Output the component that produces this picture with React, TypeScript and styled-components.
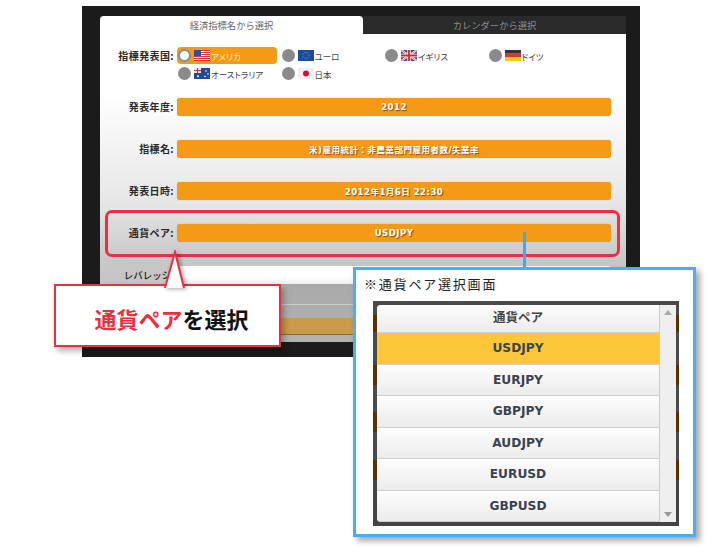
import styled, { createGlobalStyle } from "styled-components";

const GlobalStyle = createGlobalStyle`
  html, body {
    margin: 0;
    background: #fff;
    font-family: "Noto Sans CJK JP", "Liberation Sans", sans-serif;
  }
`;

const Stage = styled.div`
  position: relative;
  width: 725px;
  height: 560px;
  overflow: hidden;
  padding: 6px 0 0 82px;
  box-sizing: border-box;
`;

const Frame = styled.div`
  width: 558px;
  height: 351px;
  box-sizing: border-box;
  background: #1b1b1b;
  padding: 10px 14px 15px 18px;
  display: flex;
  flex-direction: column;
`;

const Tabs = styled.div`
  display: flex;
  height: 18px;
  background: #2a2a2a;
`;

const Tab = styled.div<{ $active?: boolean }>`
  display: flex;
  align-items: center;
  justify-content: center;
  width: 263px;
  font-size: 9.3px;
  border-radius: 4px 4px 0 0;
  background: ${(p) => (p.$active ? "#fff" : "transparent")};
  color: ${(p) => (p.$active ? "#666" : "#8a8a8a")};
`;

const Panel = styled.div`
  flex: 1;
  overflow: hidden;
  padding: 13px 15px 0 17px;
  background: linear-gradient(#fff 0, #fff 60px, #e6e6e6 170px, #c8c8c8 225px, #bcbcbc 100%);
  display: flex;
  flex-direction: column;
`;

const Row = styled.div`
  display: flex;
  align-items: center;
  height: 18px;
  margin-bottom: 24px;
`;

const CountryRow = styled(Row)`
  height: 38px;
  margin-bottom: 13px;
  align-items: flex-start;
`;

const Label = styled.div`
  width: 60px;
  flex: none;
  box-sizing: border-box;
  padding-right: 3px;
  text-align: right;
  font-size: 10px;
  font-weight: 700;
  letter-spacing: 0.4px;
  line-height: 18px;
  color: #2a2a2a;
  white-space: nowrap;
`;

const Countries = styled.div`
  display: grid;
  grid-template-columns: repeat(4, 103.5px);
  grid-auto-rows: 18px;
`;

const Country = styled.div<{ $on?: boolean }>`
  display: flex;
  align-items: center;
  width: 100px;
  height: 17px;
  padding-left: 1px;
  box-sizing: border-box;
  border-radius: 4px;
  font-size: 8.5px;
  font-feature-settings: "palt";
  background: ${(p) => (p.$on ? "#f49a17" : "transparent")};
  color: ${(p) => (p.$on ? "#fbe6c0" : "#444")};
`;

const Radio = styled.span<{ $on?: boolean }>`
  width: 13px;
  height: 13px;
  border-radius: 50%;
  flex: none;
  box-sizing: border-box;
  background: ${(p) => (p.$on ? "#fff" : "#8a8a8a")};
  border: ${(p) => (p.$on ? "2px solid #7f8fa8" : "none")};
`;

const Flag = styled.svg`
  width: 16px;
  height: 11px;
  flex: none;
  margin: 0 1px 0 3px;
`;

const Bar = styled.div`
  width: 434px;
  height: 18px;
  border-radius: 3px;
  background: #f49a17;
  box-shadow: 0 0 1px #aaa;
  color: #fff;
  display: flex;
  align-items: center;
  justify-content: center;
  font-family: "DejaVu Sans", "Noto Sans CJK JP", sans-serif;
  font-size: 8.5px;
  font-weight: 700;
  letter-spacing: 0.5px;
  text-shadow: 1px 1px 1px rgba(90, 50, 0, 0.7);
`;

const LeverageBar = styled(Bar)`
  background: linear-gradient(#fff, #fff 60%, #eee);
  box-shadow: none;
`;

const LeverageRow = styled(Row)`
  margin-bottom: 0;
`;

const LeverageLabel = styled(Label)`
  font-size: 9.5px;
  font-weight: 500;
  letter-spacing: 0;
  color: #222;
`;

const Dimmed = styled.div`
  margin: 0 -15px 0 -17px;
  height: 58px;
  background: linear-gradient(#a9a9a9, #b2b2b2);
  display: flex;
  flex-direction: column;
  padding-top: 20px;
  box-sizing: border-box;
`;

const DimLine = styled.div`
  height: 1px;
  background: #ccc;
  margin-bottom: 13px;
`;

const DimBar = styled.div`
  height: 16px;
  background: #c99a4a;
  border-bottom: 1px solid #8d6a2c;
`;

const Highlight = styled.div`
  position: absolute;
  left: 105px;
  top: 210px;
  width: 515px;
  height: 47px;
  box-sizing: border-box;
  border: 3px solid #e9303f;
  border-radius: 7px;
`;

const Callout = styled.div`
  position: absolute;
  left: 54px;
  top: 284px;
  width: 227px;
  height: 63px;
  box-sizing: border-box;
  background: #fff;
  border: 2px solid #e9303f;
  box-shadow: 3px 4px 6px rgba(0, 0, 0, 0.3);
  display: flex;
  align-items: center;
  justify-content: center;
  font-size: 22px;
  font-weight: 700;
  color: #111;
  padding: 5px 0 0 8px;
`;

const CalloutTail = styled.svg`
  position: absolute;
  left: 108px;
  top: -36px;
  width: 22px;
  height: 38px;
  filter: drop-shadow(2px 1px 2px rgba(0, 0, 0, 0.35));
`;

const Accent = styled.span`
  color: #e9303f;
`;

const Connector = styled.div`
  position: absolute;
  left: 523px;
  top: 232px;
  width: 3px;
  height: 36px;
  background: #3fa9f5;
`;

const Zoomed = styled.div`
  position: absolute;
  left: 353px;
  top: 267px;
  width: 343px;
  height: 270px;
  box-sizing: border-box;
  background: #fff;
  border: 3px solid #47aef7;
  box-shadow: 4px 4px 6px rgba(0, 0, 0, 0.35);
  padding: 4px 0 0 8px;
`;

const ZoomTitle = styled.div`
  font-size: 13px;
  line-height: 20px;
  letter-spacing: 1.8px;
  color: #222;
  margin-bottom: 7px;
`;

const PairBox = styled.div`
  width: 306px;
  height: 225px;
  margin-left: 9px;
  box-sizing: border-box;
  background: linear-gradient(
    #4a4a4a 0 14px,
    #5a3200 14px 31px,
    #4a4a4a 31px 64px,
    #5a3200 64px 84px,
    #4a4a4a 84px 111px,
    #5a3200 111px 131px,
    #4a4a4a 131px 159px,
    #5a3200 159px 179px,
    #444 179px
  );
  padding: 4px 3px 4px 4px;
  display: flex;
`;

const PairList = styled.div`
  width: 283px;
  flex: none;
  display: flex;
  flex-direction: column;
  background: #f4f4f4;
  border-radius: 4px 0 0 4px;
  overflow: hidden;
`;

const PairItem = styled.div<{ $on?: boolean }>`
  flex: 1;
  box-sizing: border-box;
  display: flex;
  align-items: center;
  justify-content: center;
  font-family: "DejaVu Sans", "Noto Sans CJK JP", sans-serif;
  font-size: 12.2px;
  font-weight: 700;
  color: #3a4350;
  background: ${(p) => (p.$on ? "#fdc73a" : "linear-gradient(#fdfdfd, #ececec)")};
  border-right: 1px solid #ccc;
  border-bottom: 1px solid #cfcfcf;
`;

const PairHead = styled(PairItem)`
  flex: none;
  height: 28px;
  padding-bottom: 4px;
  font-family: "Noto Sans CJK JP", sans-serif;
  font-size: 12.5px;
  color: #444;
`;

const ScrollTrack = styled.div`
  flex: 1;
  background: #efefef;
  display: flex;
  flex-direction: column;
  justify-content: space-between;
  align-items: center;
  padding: 5px 0;
`;

const Arrow = styled.svg`
  width: 8px;
  height: 5px;
`;

const pairs = ["USDJPY", "EURJPY", "GBPJPY", "AUDJPY", "EURUSD", "GBPUSD"];

function UsFlag() {
  return (
    <Flag viewBox="0 0 16 11">
      <rect width="16" height="11" fill="#fff" />
      {[0, 2, 4, 6, 8, 10].map((y) => (
        <rect key={y} y={y} width="16" height="1" fill="#d33" />
      ))}
      <rect width="7" height="6" fill="#2d4f9e" />
    </Flag>
  );
}

function EuFlag() {
  return (
    <Flag viewBox="0 0 16 11">
      <rect width="16" height="11" fill="#1c4ea0" />
      <circle cx="8" cy="5.5" r="3" fill="none" stroke="#c9b84a" strokeWidth="0.6" strokeDasharray="0.8 0.8" />
    </Flag>
  );
}

function UkFlag() {
  return (
    <Flag viewBox="0 0 16 11">
      <rect width="16" height="11" fill="#2b4a92" />
      <path d="M0 0L16 11M16 0L0 11" stroke="#fff" strokeWidth="2" />
      <path d="M0 0L16 11M16 0L0 11" stroke="#d33" strokeWidth="0.7" />
      <path d="M8 0V11M0 5.5H16" stroke="#fff" strokeWidth="3.4" />
      <path d="M8 0V11M0 5.5H16" stroke="#d22" strokeWidth="1.8" />
    </Flag>
  );
}

function DeFlag() {
  return (
    <Flag viewBox="0 0 16 11">
      <rect width="16" height="3.7" fill="#333" />
      <rect y="3.7" width="16" height="3.7" fill="#d33" />
      <rect y="7.4" width="16" height="3.6" fill="#f5c518" />
    </Flag>
  );
}

function AuFlag() {
  return (
    <Flag viewBox="0 0 16 11">
      <rect width="16" height="11" fill="#1f4c9c" />
      <rect width="7" height="5" fill="#e8e8f0" />
      <path d="M3.5 0V5M0 2.5H7" stroke="#d33" strokeWidth="1.2" />
      <circle cx="4" cy="8.3" r="1" fill="#fff" />
      <circle cx="12" cy="3" r="0.8" fill="#fff" />
      <circle cx="14" cy="6" r="0.8" fill="#fff" />
      <circle cx="11" cy="8.5" r="0.8" fill="#fff" />
    </Flag>
  );
}

function JpFlag() {
  return (
    <Flag viewBox="0 0 16 11">
      <rect width="16" height="11" fill="#f0f0f0" />
      <circle cx="8" cy="5.5" r="3" fill="#d0103a" />
    </Flag>
  );
}

export default function App() {
  return (
    <>
      <GlobalStyle />
      <Stage>
        <Frame>
          <Tabs>
            <Tab $active>経済指標名から選択</Tab>
            <Tab>カレンダーから選択</Tab>
          </Tabs>
          <Panel>
            <CountryRow>
              <Label>指標発表国:</Label>
              <Countries>
                <Country $on><Radio $on /><UsFlag />アメリカ</Country>
                <Country><Radio /><EuFlag />ユーロ</Country>
                <Country><Radio /><UkFlag />イギリス</Country>
                <Country><Radio /><DeFlag />ドイツ</Country>
                <Country><Radio /><AuFlag />オーストラリア</Country>
                <Country><Radio /><JpFlag />日本</Country>
              </Countries>
            </CountryRow>
            <Row>
              <Label>発表年度:</Label>
              <Bar>2012</Bar>
            </Row>
            <Row>
              <Label>指標名:</Label>
              <Bar>米)雇用統計：非農業部門雇用者数/失業率</Bar>
            </Row>
            <Row>
              <Label>発表日時:</Label>
              <Bar>2012年1月6日 22:30</Bar>
            </Row>
            <Row>
              <Label>通貨ペア:</Label>
              <Bar>USDJPY</Bar>
            </Row>
            <LeverageRow>
              <LeverageLabel>レバレッジ:</LeverageLabel>
              <LeverageBar />
            </LeverageRow>
            <Dimmed>
              <DimLine />
              <DimBar />
            </Dimmed>
          </Panel>
        </Frame>
        <Highlight />
        <Connector />
        <Callout>
          <CalloutTail viewBox="0 0 22 38">
            <path d="M1 38L11 2L20 38" fill="#fff" stroke="#e9303f" strokeWidth="2" />
          </CalloutTail>
          <span><Accent>通貨ペア</Accent>を選択</span>
        </Callout>
        <Zoomed>
          <ZoomTitle>※通貨ペア選択画面</ZoomTitle>
          <PairBox>
            <PairList>
              <PairHead>通貨ペア</PairHead>
              {pairs.map((pair, i) => (
                <PairItem key={pair} $on={i === 0}>{pair}</PairItem>
              ))}
            </PairList>
            <ScrollTrack>
              <Arrow viewBox="0 0 8 5"><path d="M4 0L8 5H0Z" fill="#aaa" /></Arrow>
              <Arrow viewBox="0 0 8 5"><path d="M0 0H8L4 5Z" fill="#999" /></Arrow>
            </ScrollTrack>
          </PairBox>
        </Zoomed>
      </Stage>
    </>
  );
}
